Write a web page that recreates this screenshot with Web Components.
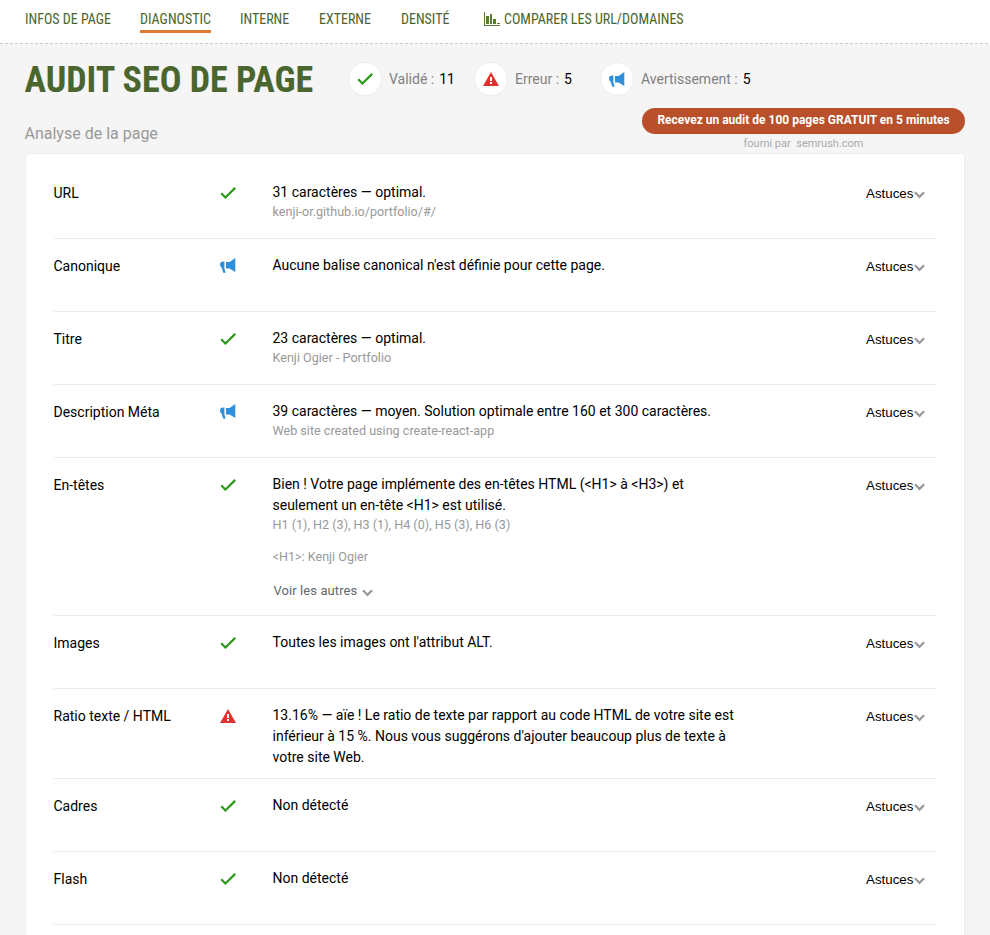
<!DOCTYPE html>
<html lang="fr">
<head>
<meta charset="utf-8">
<title>Audit SEO de page</title>
<style>
html,body{margin:0;height:935px;overflow:hidden;background:#f5f5f5;font-family:Roboto,"Liberation Sans",sans-serif;color:#000}
</style>
</head>
<body>
<audit-page></audit-page>
<script>
const icons = {
  check: '<svg width="16" height="12" viewBox="0 0 16 12"><path d="M1.2 6.3L5.4 10.5L15.2 .9" fill="none" stroke="#2c9a1a" stroke-width="2.2"/></svg>',
  error: '<svg width="16" height="14" viewBox="0 0 16 14"><path d="M8 0L16 14H0Z" fill="#e03131"/><path d="M7 5h2v4H7zM7 10h2v2H7z" fill="#fff"/></svg>',
  warn: '<svg width="16" height="15" viewBox="0 0 16 15"><path d="M15.3 0V14L9.6 10.6H6V3.9H9.6ZM4.4 3.6V10.4L5.6 14.7H3.2L1.7 9.7Q0 8.8 0 6.8Q0 3.7 3.4 3.6Z" fill="#2e90dd"/></svg>',
  chevron: '<svg width="11" height="8" viewBox="0 0 11 8"><path d="M.9 1.3L5.5 5.8L10.1 1.3" fill="none" stroke="#999" stroke-width="2.3"/></svg>',
  chart: '<svg width="16" height="14" viewBox="0 0 16 14"><path d="M0 0H1V13H16V14H0ZM2 4H5V12H2ZM6 2H8V12H6ZM9 7H12V12H9ZM13 11H16V12H13Z" fill="#577a36"/></svg>'
};
class Base extends HTMLElement {
  constructor(){ super(); this.attachShadow({mode:'open'}); }
  connectedCallback(){ this.shadowRoot.innerHTML = this.render(); }
}
customElements.define('ui-icon', class extends Base {
  render(){ return `<style>:host{display:inline-flex;flex:none}svg{display:block}</style>${icons[this.getAttribute('name')]}`; }
});
customElements.define('nav-tab', class extends Base {
  render(){ return `<style>
    :host{display:flex;align-items:center;height:29px;padding-top:3px;border-bottom:3px solid transparent;font:400 14px/20px "Roboto Condensed",Roboto,sans-serif;font-stretch:75%;color:#4a652d;white-space:nowrap;box-sizing:border-box;flex:none}
    :host([active]){border-color:#e07b33}
    ::slotted(ui-icon){margin-right:4px}
    </style><slot></slot>`; }
});
customElements.define('nav-bar', class extends Base {
  render(){ return `<style>
    :host{display:flex;align-items:flex-start;background:#fff;height:44px;box-sizing:border-box;padding:4px 0 0 25px;background-image:repeating-linear-gradient(90deg,#c9c9c9 0 3px,transparent 3px 5px);background-size:100% 1px;background-position:0 43px;background-repeat:no-repeat}
    </style><slot></slot>`; }
});
customElements.define('status-badge', class extends Base {
  render(){ return `<style>
    :host{display:flex;align-items:center;flex:none;width:126px;font-size:14px;line-height:20px;color:#818181;white-space:nowrap}
    i{display:flex;flex:none;align-items:center;justify-content:center;width:32px;height:32px;border-radius:50%;background:#fff;border:1px solid #ededed;margin-right:7px}
    b{font-weight:400;color:#000;margin-left:5px}
    </style><i><ui-icon name="${this.getAttribute('icon')}"></ui-icon></i><slot></slot><b>${this.getAttribute('count')}</b>`; }
});
customElements.define('promo-link', class extends Base {
  render(){ return `<style>
    :host{display:flex;flex-direction:column;align-items:center;width:323px}
    a{display:block;flex:none;box-sizing:border-box;width:323px;height:26px;border-radius:13px;background:#b94f2b;color:#fff;text-align:center;font-weight:700;font-size:12px;line-height:25px;white-space:nowrap}
    small{font-size:11px;line-height:19px;color:#aaa;white-space:pre}
    </style><a><slot></slot></a><small>fourni par  semrush.com</small>`; }
});
customElements.define('audit-row', class extends Base {
  render(){ return `<style>
    :host{display:grid;grid-template-columns:166px 53px 480px 1fr;min-height:73px;box-sizing:border-box;border-bottom:1px solid #ebebeb;padding:16px 0 10px;font-size:14px;line-height:21px}
    .label{padding-top:1px;margin-left:-.5px}
    .body{margin-left:-.5px}
    .icon{display:flex;height:21px;align-items:center}
    .tips{display:flex;align-items:center;height:23px;padding-left:113px;font-family:"Liberation Sans",Arial,sans-serif;font-size:13.333px}
    .tips ui-icon{margin:3px 0 0 .6px}
    </style><span class="label">${this.getAttribute('label')}</span>
    <span class="icon"><ui-icon name="${this.getAttribute('status')}"></ui-icon></span>
    <div class="body"><slot></slot></div>
    <span class="tips"><span>Astuces</span><ui-icon name="chevron"></ui-icon></span>`; }
});
customElements.define('row-note', class extends Base {
  render(){ return `<style>:host{display:block;font-size:12.6px;line-height:18px;color:#999}</style><slot></slot>`; }
});
customElements.define('more-toggle', class extends Base {
  render(){ return `<style>:host{display:flex;align-items:center;margin:15px 0 4px 1px;font-size:13px;line-height:20px;color:#666;letter-spacing:.08px}ui-icon{margin:3px 0 0 5px}</style><slot></slot><ui-icon name="chevron"></ui-icon>`; }
});
customElements.define('audit-card', class extends Base {
  render(){ return `<style>:host{display:block;margin:0 25px;height:800px;box-sizing:border-box;background:#fff;border:1px solid #ececec;border-radius:3px;padding:12px 28px 0}</style><slot></slot>`; }
});
customElements.define('audit-page', class extends Base {
  render(){ return `<style>
    :host{display:block;width:990px;height:935px;overflow:hidden}
    .head{display:flex;align-items:center;height:64px;padding:6px 0 0 25px;box-sizing:border-box}
    h1{margin:0;padding-top:2px;width:323px;font:700 36px/44px "Roboto Condensed",Roboto,sans-serif;font-stretch:75%;color:#4a652d;white-space:nowrap;text-indent:-.5px}
    .sub{display:flex;justify-content:space-between;height:45px;padding:0 25px}
    h2{margin:16px 0 0 -.5px;font-weight:400;font-size:16px;line-height:20px;color:#999}
    </style>
    <nav-bar>
      <nav-tab style="width:115px">INFOS DE PAGE</nav-tab>
      <nav-tab active style="margin-right:29px">DIAGNOSTIC</nav-tab>
      <nav-tab style="width:79px">INTERNE</nav-tab>
      <nav-tab style="width:82px">EXTERNE</nav-tab>
      <nav-tab style="width:83px">DENSITÉ</nav-tab>
      <nav-tab><ui-icon name="chart"></ui-icon>COMPARER LES URL/DOMAINES</nav-tab>
    </nav-bar>
    <div class="head"><h1>AUDIT SEO DE PAGE</h1>
      <status-badge icon="check" count="11">Validé :</status-badge>
      <status-badge icon="error" count="5">Erreur :</status-badge>
      <status-badge icon="warn" count="5">Avertissement :</status-badge>
    </div>
    <div class="sub"><h2>Analyse de la page</h2><promo-link>Recevez un audit de 100 pages GRATUIT en 5 minutes</promo-link></div>
    <audit-card>
      <audit-row label="URL" status="check">31 caractères — optimal.<row-note>kenji-or.github.io/portfolio/#/</row-note></audit-row>
      <audit-row label="Canonique" status="warn">Aucune balise canonical n'est définie pour cette page.</audit-row>
      <audit-row label="Titre" status="check">23 caractères — optimal.<row-note>Kenji Ogier - Portfolio</row-note></audit-row>
      <audit-row label="Description Méta" status="warn">39 caractères — moyen. Solution optimale entre 160 et 300 caractères.<row-note>Web site created using create-react-app</row-note></audit-row>
      <audit-row label="En-têtes" status="check">Bien ! Votre page implémente des en-têtes HTML (&lt;H1&gt; à &lt;H3&gt;) et<br>seulement un en-tête &lt;H1&gt; est utilisé.<row-note>H1 (1), H2 (3), H3 (1), H4 (0), H5 (3), H6 (3)</row-note><row-note style="margin-top:14px">&lt;H1&gt;: Kenji Ogier</row-note><more-toggle>Voir les autres</more-toggle></audit-row>
      <audit-row label="Images" status="check">Toutes les images ont l'attribut ALT.</audit-row>
      <audit-row label="Ratio texte / HTML" status="error">13.16% — aïe ! Le ratio de texte par rapport au code HTML de votre site est<br>inférieur à 15 %. Nous vous suggérons d'ajouter beaucoup plus de texte à<br>votre site Web.</audit-row>
      <audit-row label="Cadres" status="check">Non détecté</audit-row>
      <audit-row label="Flash" status="check">Non détecté</audit-row>
    </audit-card>`; }
});
</script>
</body>
</html>
